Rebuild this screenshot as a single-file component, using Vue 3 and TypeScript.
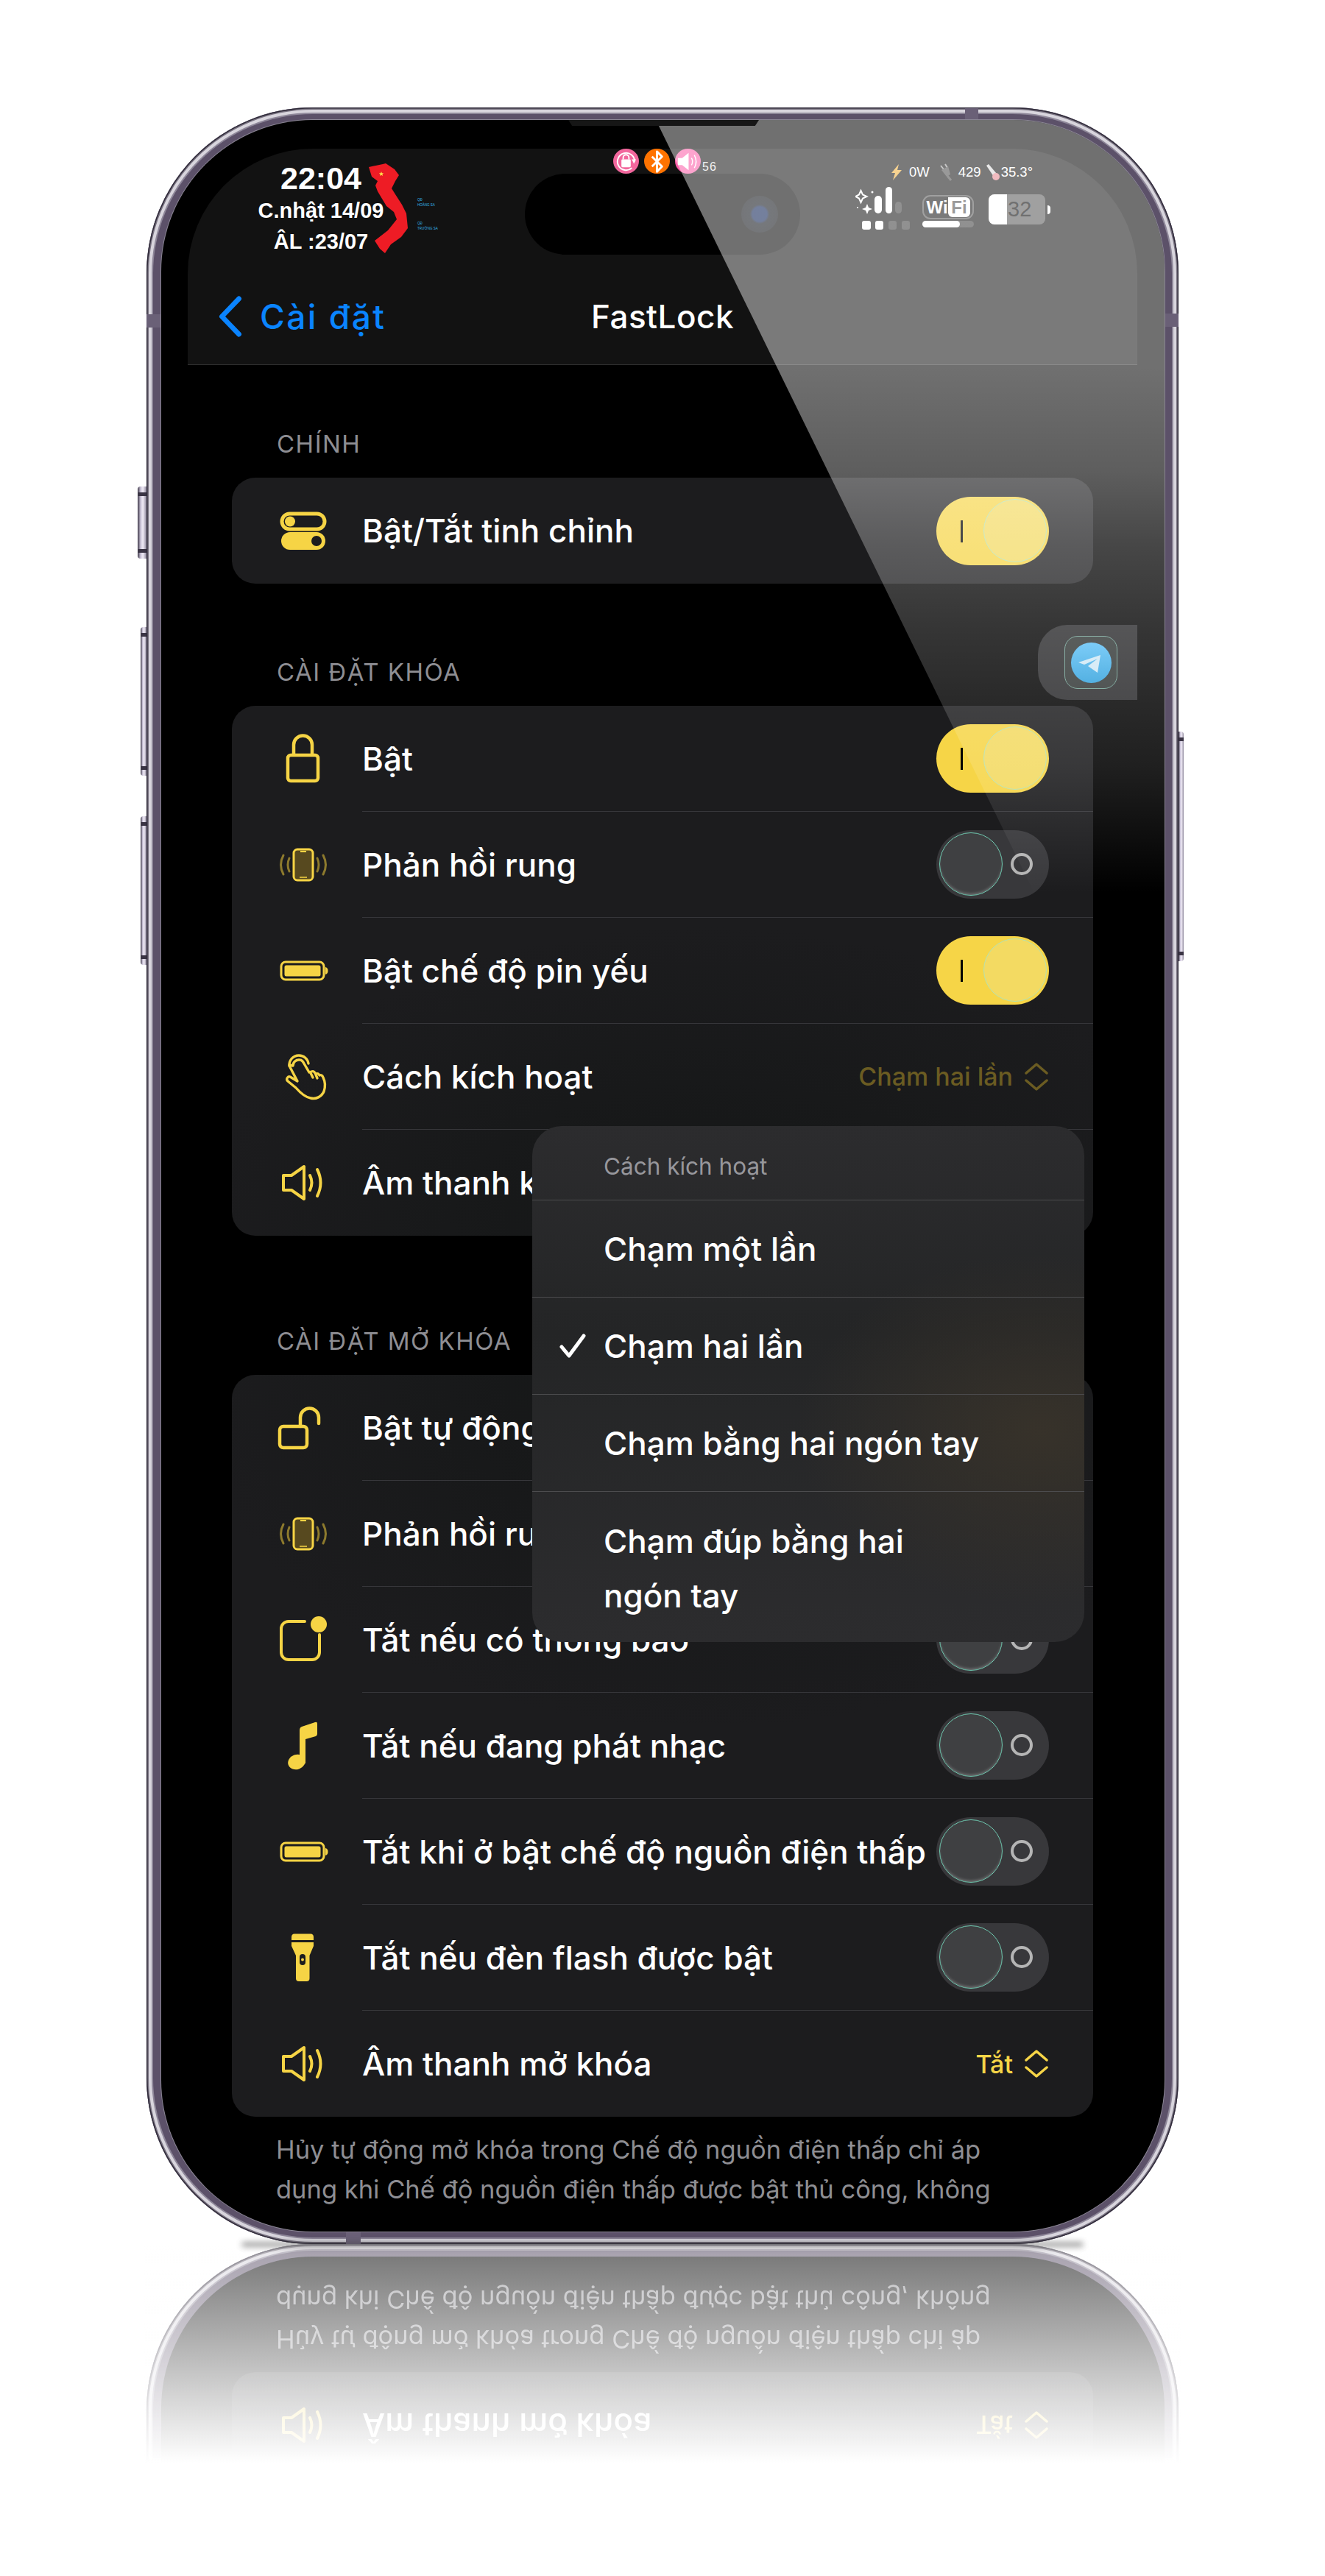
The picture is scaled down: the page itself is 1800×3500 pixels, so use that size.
<script setup lang="ts">
interface Row {
  icon: string;
  label: string;
  toggle?: "on" | "off";
  value?: string;
  dim?: boolean;
}

const mainRows: Row[] = [
  { icon: "switches", label: "Bật/Tắt tinh chỉnh", toggle: "on" },
];

const lockRows: Row[] = [
  { icon: "lock", label: "Bật", toggle: "on" },
  { icon: "haptic", label: "Phản hồi rung", toggle: "off" },
  { icon: "battery", label: "Bật chế độ pin yếu", toggle: "on" },
  { icon: "hand", label: "Cách kích hoạt", value: "Chạm hai lần", dim: true },
  { icon: "speaker", label: "Âm thanh khóa", value: "Tắt" },
];

const unlockRows: Row[] = [
  { icon: "unlock", label: "Bật tự động mở khóa", toggle: "off" },
  { icon: "haptic", label: "Phản hồi rung", toggle: "off" },
  { icon: "notice", label: "Tắt nếu có thông báo", toggle: "off" },
  { icon: "music", label: "Tắt nếu đang phát nhạc", toggle: "off" },
  { icon: "battery", label: "Tắt khi ở bật chế độ nguồn điện thấp", toggle: "off" },
  { icon: "flash", label: "Tắt nếu đèn flash được bật", toggle: "off" },
  { icon: "speaker", label: "Âm thanh mở khóa", value: "Tắt" },
];

const sections = [
  { title: "Chính", rows: mainRows, cls: "first" },
  { title: "Cài đặt khóa", rows: lockRows, cls: "lock" },
  { title: "Cài đặt mở khóa", rows: unlockRows, cls: "unlock" },
];

const menu = [
  { label: "Chạm một lần", checked: false },
  { label: "Chạm hai lần", checked: true },
  { label: "Chạm bằng hai ngón tay", checked: false },
  { label: "Chạm đúp bằng hai ngón tay", checked: false, wide: true },
];

const footLines = [
  "Hủy tự động mở khóa trong Chế độ nguồn điện thấp chỉ áp",
  "dụng khi Chế độ nguồn điện thấp được bật thủ công, không",
];
</script>

<template>
  <svg class="defs" width="0" height="0">
    <symbol id="i-switches" viewBox="0 0 72 72">
      <rect x="7" y="13" width="58" height="21" rx="10.5" fill="none" stroke="#f6d445" stroke-width="5" />
      <circle cx="18" cy="23.5" r="7" fill="#f6d445" />
      <rect x="6" y="38" width="60" height="24" rx="12" fill="#f6d445" />
      <circle cx="54" cy="50" r="7" fill="#1c1c1e" />
    </symbol>
    <symbol id="i-lock" viewBox="0 0 72 72">
      <rect x="15" y="31" width="41" height="35" rx="4" fill="none" stroke="#f6d445" stroke-width="4.5" />
      <path d="M23 31V17a12.5 12.5 0 0 1 25 0V31" fill="none" stroke="#f6d445" stroke-width="4.5" />
    </symbol>
    <symbol id="i-unlock" viewBox="0 0 72 72">
      <rect x="4" y="34" width="37" height="29" rx="5" fill="none" stroke="#f6d445" stroke-width="4.5" />
      <path d="M32 34V22a12.5 12.5 0 0 1 25 0V30" fill="none" stroke="#f6d445" stroke-width="4.5" stroke-linecap="round" />
    </symbol>
    <symbol id="i-haptic" viewBox="0 0 72 72">
      <rect x="23" y="15" width="26" height="42" rx="5" fill="#57491f" stroke="#f6d445" stroke-width="3" />
      <path d="M32 18h8" stroke="#f6d445" stroke-width="2" />
      <path d="M31 53h10" stroke="#f6d445" stroke-width="1.5" />
      <g fill="none" stroke="#8d7a2d" stroke-width="3" stroke-linecap="round">
        <path d="M17 27q-4 9 0 18" />
        <path d="M9 23q-7 13 0 26" />
        <path d="M55 27q4 9 0 18" />
        <path d="M63 23q7 13 0 26" />
      </g>
    </symbol>
    <symbol id="i-battery" viewBox="0 0 72 72">
      <rect x="6" y="24" width="58" height="24" rx="6" fill="none" stroke="#f6d445" stroke-width="3" />
      <rect x="10.5" y="28.5" width="49" height="15" rx="2.5" fill="#f6d445" />
      <path d="M66 31c3 1 3.5 2.5 3.5 5s-.5 4-3.5 5z" fill="#f6d445" />
    </symbol>
    <symbol id="i-hand" viewBox="0 0 72 72">
      <g fill="none" stroke="#f6d445" stroke-width="3.4" stroke-linecap="round" stroke-linejoin="round">
        <path d="M17 21a13 13 0 0 1 13-14c7 0 12 5 13 11" />
        <path d="M22 21a8 8 0 0 1 9-8c3 0 5 3 6 5l7 12 3-1c2-1 4 0 5 2l1 1c2-1 4 0 5 2 2-1 4 0 5 3 3 6 3 13 1 19-3 7-11 11-18 9-7-1-13-6-20-14l-11-9c-3-3 0-7 3-6l10 6-10-19c-1-1-1-2-1-3z" />
        <path d="M46 31l3 6M53 33l2 5" />
      </g>
    </symbol>
    <symbol id="i-speaker" viewBox="0 0 72 72">
      <g fill="none" stroke="#f6d445" stroke-width="4" stroke-linecap="round" stroke-linejoin="round">
        <path d="M9 26h11l17-12v44L20 46H9z" />
        <path d="M45 26q5 10 0 20" />
        <path d="M55 18q9 18 0 36" />
      </g>
    </symbol>
    <symbol id="i-notice" viewBox="0 0 72 72">
      <path d="M38 11H16a10 10 0 0 0-10 10v32a10 10 0 0 0 10 10h32a10 10 0 0 0 10-10V29" fill="none" stroke="#f6d445" stroke-width="4" stroke-linecap="round" />
      <circle cx="57" cy="15" r="11" fill="#f6d445" />
    </symbol>
    <symbol id="i-music" viewBox="0 0 72 72">
      <path d="M31 15q0-4 3-5l18-6q3-1 3 2v14q0 2-2 3l-14 4v33h-8z" fill="#f6d445" />
      <ellipse cx="27" cy="58" rx="12" ry="10" transform="rotate(-20 27 58)" fill="#f6d445" />
    </symbol>
    <symbol id="i-flash" viewBox="0 0 72 72">
      <path d="M20 8q0-4.500 4-4.500h22q4 0 4 4.500v4H20z" fill="#f6d445" />
      <path d="M20 15h30v5l-5.500 13v31q0 4-4 4H30q-4 0-4-4V33l-6-13z" fill="#f6d445" />
      <rect x="31" y="31" width="8" height="15" rx="4" fill="#1c1c1e" />
      <circle cx="35" cy="38.500" r="2" fill="#f6d445" />
    </symbol>
  </svg>

  <div class="page">
    <div class="phone">
      <i class="btn silent"></i>
      <i class="btn vol-up"></i>
      <i class="btn vol-down"></i>
      <i class="btn power"></i>
      <i class="band band-top"></i>
      <i class="band band-left"></i>
      <i class="band band-right"></i>
      <i class="band band-bottom"></i>

      <div class="screen">
        <i class="speaker-slit"></i>

        <header class="panel">
          <div class="status">
            <div class="st-left">
              <div class="clock">
                <div class="time">22:04</div>
                <div class="date">C.nhật 14/09</div>
                <div class="date">ÂL :23/07</div>
              </div>
              <svg class="map" viewBox="0 0 100 125" width="100" height="125">
                <path d="M0 5 19 1 23 0 35 8 41 16 36 24 31 34 36 42 45 56 51 68 53 88 44 100 30 110 22 122 15 116 8 105 26 91 38 76 34 66 24 58 12 38 9 30 12 24 4 18Z" fill="#ee1c25" />
                <path d="M17 11l.9 2.200 2.300.1-1.800 1.500.6 2.300-2-1.300-2 1.300.6-2.300-1.800-1.500 2.300-.1z" fill="#ffe14a" />
                <text class="islet" x="66" y="51">QĐ</text>
                <text class="islet" x="66" y="58">HOÀNG SA</text>
                <text class="islet" x="66" y="83">QĐ</text>
                <text class="islet" x="66" y="90">TRƯỜNG SA</text>
              </svg>
            </div>

            <div class="st-center">
              <div class="notify">
                <span class="dot pink">
                  <svg viewBox="0 0 36 36" width="35" height="35">
                    <path d="M30 18a12 12 0 1 0-4 9" fill="none" stroke="#fff" stroke-width="2" />
                    <path d="M32 15l-3 6-3-6z" fill="#fff" />
                    <rect x="11.500" y="15" width="13" height="11" rx="1.500" fill="#fff" />
                    <path d="M14 15v-2.500a4 4 0 0 1 8 0V15" fill="none" stroke="#fff" stroke-width="2" />
                  </svg>
                </span>
                <span class="dot orange">
                  <svg viewBox="0 0 36 36" width="35" height="35">
                    <path d="M11 11l14 14-7 7V4l7 7-14 14" fill="none" stroke="#fff" stroke-width="3" stroke-linejoin="round" />
                  </svg>
                </span>
                <span class="dot pink2">
                  <svg viewBox="0 0 36 36" width="35" height="35">
                    <path d="M4 13h6l9-7v24l-9-7H4z" fill="#fff" />
                    <path d="M23 13q3 5 0 10M27 9q5 9 0 18" fill="none" stroke="#fff" stroke-width="1.500" />
                  </svg>
                </span>
                <span class="vol">56</span>
              </div>
              <div class="island"><span class="camera"></span></div>
            </div>

            <div class="st-right">
              <div class="metrics">
                <svg viewBox="0 0 18 22" width="18" height="22">
                  <path d="M12 0 2 12h5L4 22l12-14h-6z" fill="#f2b13a" />
                </svg>
                <span class="m-zero">0W</span>
                <svg viewBox="0 0 24 24" width="24" height="24">
                  <path d="M6 3l4 5M12 1l3 5" stroke="#9a9a9a" stroke-width="2" />
                  <path d="M7 9l9-5 3 11-5 3z" fill="#4a4a4a" />
                  <path d="M15 17l5 6" stroke="#4a4a4a" stroke-width="3" />
                </svg>
                <span>429</span>
                <svg viewBox="0 0 22 24" width="22" height="24">
                  <path d="M2 3l3-2 11 13-4 4z" fill="#d8d8d8" />
                  <circle cx="15" cy="18" r="5" fill="#e5868e" />
                </svg>
                <span class="m-temp">35.3°</span>
              </div>
              <div class="signals">
                <svg viewBox="0 0 74 58" width="74" height="58">
                  <path d="M7.500 5l2.500 5.500L15.500 13 10 15.500 7.500 21 5 15.500 0 13 5 10.500Z" fill="none" stroke="#fff" stroke-width="2" />
                  <path d="M16 23l2 5 5 2-5 2-2 5-2-5-5-2 5-2Z" fill="#fff" />
                  <circle cx="23" cy="7" r="1.500" fill="#fff" />
                  <circle cx="3" cy="28" r="1" fill="#fff" />
                  <rect x="26" y="12" width="10" height="24" rx="5" fill="#fff" />
                  <rect x="41" y="0" width="9" height="36" rx="4.500" fill="#fff" />
                  <rect x="54" y="20" width="9" height="16" rx="4.500" fill="#3a3a3a" />
                  <rect x="9" y="46" width="12" height="12" rx="3" fill="#fff" />
                  <rect x="27" y="46" width="11" height="12" rx="3" fill="#fff" />
                  <rect x="45" y="46" width="11" height="12" rx="3" fill="#3a3a3a" />
                  <rect x="63" y="46" width="11" height="12" rx="3" fill="#3a3a3a" />
                </svg>
                <div class="wifi">
                  <div class="wifi-box"><b>Wi</b><b class="fi">Fi</b></div>
                  <div class="wifi-bar"><i></i></div>
                </div>
                <div class="batt">
                  <div class="batt-body"><i></i><span>32</span></div>
                  <i class="batt-nub"></i>
                </div>
              </div>
            </div>
          </div>

          <nav class="nav">
            <div class="back">
              <svg viewBox="0 0 36 60" width="36" height="58">
                <path d="M30 5 6 30l24 25" fill="none" stroke="#0a84ff" stroke-width="7" stroke-linecap="round" stroke-linejoin="round" />
              </svg>
              <span>Cài đặt</span>
            </div>
            <div class="nav-title">FastLock</div>
          </nav>
        </header>

        <main class="content">
          <section v-for="s in sections" :key="s.title" class="section" :class="s.cls">
            <h3 class="label">{{ s.title }}</h3>
            <div class="card">
              <div v-for="r in s.rows" :key="r.label" class="row">
                <svg class="icon" width="72" height="72"><use :href="'#i-' + r.icon" /></svg>
                <div class="row-body">
                  <span class="row-text">{{ r.label }}</span>
                  <span v-if="r.toggle" class="toggle" :class="r.toggle">
                    <i class="mark"></i>
                    <i class="knob"></i>
                  </span>
                  <span v-else class="value" :class="{ dim: r.dim }">
                    {{ r.value }}
                    <svg viewBox="0 0 34 38" width="34" height="38">
                      <path d="M3 14 17 2l14 12M3 24l14 12 14-12" fill="none" stroke="currentColor" stroke-width="3.500" stroke-linecap="round" stroke-linejoin="round" />
                    </svg>
                  </span>
                </div>
              </div>
            </div>
          </section>
          <p class="foot">{{ footLines[0] }}<br />{{ footLines[1] }}</p>
        </main>

        <div class="tg-tab">
          <div class="tg-square">
            <div class="tg-circle">
              <svg viewBox="0 0 55 55" width="55" height="55">
                <path d="M10 27 40 17 36 41 23 32 36 22 18 30Z" fill="#cfe8f5" />
              </svg>
            </div>
          </div>
        </div>

        <i class="glare"></i>

        <div class="menu">
          <div class="menu-head">Cách kích hoạt</div>
          <div v-for="m in menu" :key="m.label" class="menu-item" :class="{ wide: m.wide }">
            <svg v-if="m.checked" class="check" viewBox="0 0 36 34" width="36" height="34">
              <path d="M3 18 13 30 33 3" fill="none" stroke="#fff" stroke-width="5" stroke-linecap="round" stroke-linejoin="round" />
            </svg>
            <span>{{ m.label }}</span>
          </div>
        </div>
      </div>
    </div>

    <div class="reflection">
      <div class="mirror">
        <div class="mirror-screen">
          <div class="card mirror-card">
            <div class="row">
              <svg class="icon" width="72" height="72"><use href="#i-speaker" /></svg>
              <div class="row-body">
                <span class="row-text">Âm thanh mở khóa</span>
                <span class="value">
                  Tắt
                  <svg viewBox="0 0 34 38" width="34" height="38">
                    <path d="M3 14 17 2l14 12M3 24l14 12 14-12" fill="none" stroke="currentColor" stroke-width="3.500" stroke-linecap="round" stroke-linejoin="round" />
                  </svg>
                </span>
              </div>
            </div>
          </div>
          <p class="foot">{{ footLines[0] }}<br />{{ footLines[1] }}</p>
        </div>
      </div>
      <i class="fade"></i>
      <i class="contact"></i>
    </div>
  </div>
</template>

<style>
html,
body {
  background: #fff;
}
</style>

<style scoped>
.defs {
  position: absolute;
}
.page {
  width: 1800px;
  height: 3500px;
  padding: 146px 199px 0;
  box-sizing: border-box;
  background: #fff;
  font-family: Inter, "Noto Sans", sans-serif;
  overflow: hidden;
}
.phone {
  position: relative;
  box-sizing: border-box;
  width: 1402px;
  height: 2903px;
  padding: 17px 19px 17px 20px;
  border-radius: 226px;
  background: #5c5169;
  box-shadow:
    inset 0 0 0 1.5px #2f2a39,
    inset 0 0 0 3px #77717f,
    inset 0 0 0 7px #d8d5dd,
    inset 0 0 0 9px #8e8799;
}
.btn {
  position: absolute;
  border-radius: 4px 0 0 4px;
  background: linear-gradient(90deg, #3d3747, #cfc8dc 35%, #efeaf5 60%, #8f889c);
}
.btn::before,
.btn::after {
  content: "";
  position: absolute;
  left: 0;
  right: 0;
  height: 5px;
  background: #3a3444;
}
.btn::before {
  top: 8px;
}
.btn::after {
  bottom: 8px;
}
.silent {
  left: -12px;
  top: 515px;
  width: 12px;
  height: 98px;
}
.vol-up {
  left: -8px;
  top: 706px;
  width: 8px;
  height: 202px;
}
.vol-down {
  left: -8px;
  top: 963px;
  width: 8px;
  height: 202px;
}
.power {
  right: -7px;
  top: 848px;
  width: 7px;
  height: 312px;
  border-radius: 0 4px 4px 0;
}
.band {
  position: absolute;
  background: #6a6077;
}
.band-top {
  left: 1112px;
  top: 1px;
  width: 18px;
  height: 17px;
}
.band-left {
  left: 0;
  top: 281px;
  width: 20px;
  height: 18px;
}
.band-right {
  right: 0;
  top: 280px;
  width: 19px;
  height: 18px;
}
.band-bottom {
  left: 271px;
  bottom: 0;
  width: 20px;
  height: 17px;
}
.screen {
  position: relative;
  height: 2869px;
  border-radius: 206px;
  background: #000;
  overflow: hidden;
  box-shadow: 0 0 0 1px #8a8594;
}
.speaker-slit {
  position: absolute;
  z-index: 3;
  left: 553px;
  top: 0;
  width: 259px;
  height: 8px;
  background: #161616;
  clip-path: polygon(0 0, 100% 0, 98% 100%, 2% 100%);
}
.panel {
  margin: 39px 37px 0 36px;
  height: 294px;
  box-sizing: border-box;
  background: #121212;
  border-radius: 170px 170px 0 0;
  border-bottom: 1px solid #303030;
  display: flex;
  flex-direction: column;
}
.status {
  display: flex;
  height: 155px;
  flex: none;
  color: #fff;
  font-family: "Liberation Sans", Arial, sans-serif;
}
.st-left {
  width: 458px;
  flex: none;
  display: flex;
  padding-left: 91px;
  box-sizing: border-box;
}
.clock {
  width: 180px;
  flex: none;
  text-align: center;
  font-weight: 700;
  padding-top: 17px;
}
.time {
  font-size: 43px;
  line-height: 46px;
}
.date {
  font-size: 29px;
  line-height: 42px;
}
.map {
  margin: 20px 0 0 -25px;
}
.islet {
  font-size: 4.500px;
  fill: #35b5ea;
  font-family: "Liberation Sans", Arial, sans-serif;
}
.st-center {
  width: 374px;
  flex: none;
}
.notify {
  display: flex;
  height: 34px;
  padding-left: 120px;
  gap: 7px;
}
.dot {
  width: 35px;
  height: 34px;
  border-radius: 50%;
  overflow: hidden;
  flex: none;
}
.dot svg {
  display: block;
}
.pink {
  background: #f2679d;
}
.orange {
  background: #ff7300;
}
.pink2 {
  background: #fb5ca8;
}
.vol {
  font-size: 16px;
  letter-spacing: 1px;
  line-height: 16px;
  margin: 17px 0 0 -5px;
  opacity: 0.9;
}
.island {
  height: 110px;
  border-radius: 55px;
  background: #000;
  display: flex;
  align-items: center;
  justify-content: flex-end;
  padding-right: 30px;
  box-sizing: border-box;
}
.camera {
  width: 50px;
  height: 50px;
  border-radius: 50%;
  background: radial-gradient(circle, #081c50 0 10px, #0a0f16 13px, #08090c 100%);
}
.st-right {
  padding-left: 75px;
}
.metrics {
  height: 28px;
  margin: 18px 0 6px 47px;
  display: flex;
  align-items: center;
  font-size: 18.500px;
  white-space: nowrap;
}
.metrics span {
  margin: 0 5px 0 6px;
}
.metrics .m-zero {
  margin: 0 9px 0 8px;
}
.metrics .m-temp {
  margin: 0;
}
.signals {
  display: flex;
  align-items: flex-start;
}
.signals > svg {
  flex: none;
}
.wifi {
  margin: 11px 0 0 17px;
  width: 70px;
}
.wifi-box {
  height: 33px;
  box-sizing: border-box;
  border: 2px solid #555;
  border-radius: 11px;
  display: flex;
  align-items: center;
  padding: 0 3px;
  font-size: 24px;
  line-height: 27px;
}
.wifi-box b {
  flex: 1;
  text-align: center;
}
.wifi-box .fi {
  background: #fff;
  color: #4b4b4b;
  border-radius: 0 6px 6px 6px;
}
.wifi-bar {
  height: 9px;
  margin-top: 2px;
  border-radius: 5px;
  background: #3a3a3a;
}
.wifi-bar i {
  display: block;
  width: 51px;
  height: 9px;
  border-radius: 5px;
  background: #fff;
}
.batt {
  display: flex;
  align-items: center;
  margin: 10px 0 0 20px;
}
.batt-body {
  width: 77px;
  height: 41px;
  border-radius: 8px;
  overflow: hidden;
  background: #565656;
  display: flex;
  align-items: center;
}
.batt-body i {
  width: 25px;
  align-self: stretch;
  background: #fff;
}
.batt-body span {
  margin-left: 1px;
  font-size: 29px;
  color: #000;
}
.batt-nub {
  width: 4px;
  height: 12px;
  margin-left: 3px;
  border-radius: 0 6px 6px 0;
  background: #fff;
}
.nav {
  flex: 1;
  display: grid;
  grid-template-columns: 1fr auto 1fr;
  align-items: center;
  padding: 8px 40px 0;
}
.back {
  display: flex;
  align-items: center;
  gap: 22px;
  color: #0a84ff;
  font-size: 46px;
  letter-spacing: 2.5px;
  font-weight: 500;
}
.nav-title {
  grid-column: 2;
  color: #fff;
  font-size: 44px;
  letter-spacing: 0.5px;
  font-weight: 500;
}
.content {
  margin: 0 97px 0 96px;
}
.section {
  margin-top: 100px;
}
.section.first {
  margin-top: 87px;
}
.section.unlock {
  margin-top: 123px;
}
.label {
  margin: 0 0 26px;
  padding-left: 61px;
  font-size: 33px;
  letter-spacing: 1.5px;
  line-height: 40px;
  font-weight: 400;
  text-transform: uppercase;
  color: #8e8e93;
}
.card {
  border-radius: 32px;
  background: #1c1c1e;
}
.section.lock .card {
  background: radial-gradient(ellipse 700px 420px at 55% 100%, #141616, #1c1c1e);
}
.section.unlock .card {
  background: radial-gradient(ellipse 700px 480px at 55% 0, #141616, #1c1c1e);
}
.row {
  height: 144px;
  display: flex;
  align-items: center;
}
.icon {
  flex: none;
  margin: 0 44px 0 61px;
}
.row-body {
  flex: 1;
  min-width: 0;
  height: 144px;
  display: flex;
  align-items: center;
  justify-content: space-between;
  padding-right: 60px;
  border-bottom: 1px solid #36363a;
  box-sizing: border-box;
}
.row:last-child .row-body {
  border-bottom: 0;
}
.row-text {
  color: #fff;
  font-size: 44px;
  font-weight: 500;
  white-space: nowrap;
}
.toggle {
  position: relative;
  flex: none;
  display: block;
  width: 153px;
  height: 93px;
  border-radius: 47px;
}
.toggle.on {
  background: #f6d547;
}
.toggle.off {
  background: #38383b;
}
.mark {
  position: absolute;
  left: 33px;
  top: 32px;
  width: 3px;
  height: 30px;
  background: #000;
}
.off .mark {
  left: 101px;
  top: 31px;
  width: 30px;
  height: 30px;
  box-sizing: border-box;
  border: 4px solid #b5b5b5;
  border-radius: 50%;
  background: none;
}
.knob {
  position: absolute;
  top: 3px;
  width: 86px;
  height: 86px;
  box-sizing: border-box;
  border-radius: 50%;
}
.on .knob {
  right: 3px;
  border: 1.500px solid #b4e2b4;
  background: rgba(240, 224, 130, 0.45);
}
.off .knob {
  left: 4px;
  border: 1.500px solid #6fc9b0;
  background: #3f4042;
  box-shadow: inset 0 -3px 4px -2px rgba(255, 255, 255, 0.35);
}
.value {
  flex: none;
  display: flex;
  align-items: center;
  gap: 15px;
  font-size: 34px;
  font-weight: 500;
  color: #f6d547;
}
.value.dim {
  color: #6b5c22;
}
.foot {
  margin: 18px 0 0;
  padding-left: 60px;
  font-size: 34.5px;
  line-height: 54px;
  color: #8e8e93;
  white-space: nowrap;
}
.tg-tab {
  position: absolute;
  top: 686px;
  right: 37px;
  width: 135px;
  height: 102px;
  box-sizing: border-box;
  padding: 15px 27px 15px 36px;
  border-radius: 40px 0 0 40px;
  background: #28282a;
}
.tg-square {
  width: 72px;
  height: 72px;
  box-sizing: border-box;
  border: 1px solid #6d9d90;
  border-radius: 18px;
  background: #2f3433;
  display: flex;
  align-items: center;
  justify-content: center;
}
.tg-circle {
  width: 55px;
  height: 55px;
  border-radius: 50%;
  background: linear-gradient(#5bbff6, #2fa0dc);
}
.tg-circle svg {
  display: block;
}
.glare {
  position: absolute;
  z-index: 2;
  left: 0;
  top: 0;
  width: 100%;
  height: 1050px;
  clip-path: polygon(672px 0, 100% 0, 100% 100%, 1186px 100%);
  background: linear-gradient(
    rgba(255, 255, 255, 0.44) 0,
    rgba(255, 255, 255, 0.44) 337px,
    rgba(255, 255, 255, 0.37) 477px,
    rgba(255, 255, 255, 0.28) 577px,
    rgba(255, 255, 255, 0.21) 686px,
    rgba(255, 255, 255, 0.165) 787px,
    rgba(255, 255, 255, 0.125) 877px,
    rgba(255, 255, 255, 0) 1050px
  );
}
.menu {
  position: absolute;
  z-index: 4;
  left: 504px;
  top: 1367px;
  width: 750px;
  border-radius: 40px;
  overflow: hidden;
  color: #fff;
  font-size: 44px;
  font-weight: 500;
  background:
    radial-gradient(ellipse 330px 240px at 92% 59%, #37322a, rgba(55, 50, 42, 0)),
    linear-gradient(#2c2c2e, #242526 40%, #2c2c2e);
}
.menu-head {
  height: 100px;
  box-sizing: border-box;
  padding: 35px 0 0 97px;
  font-size: 31.500px;
  line-height: 40px;
  font-weight: 400;
  color: #97979c;
}
.menu-item {
  position: relative;
  height: 132px;
  box-sizing: border-box;
  display: flex;
  align-items: center;
  padding: 0 60px 0 97px;
  border-top: 1px solid #4c4c4e;
}
.menu-item.wide {
  height: 205px;
  line-height: 74px;
  align-items: flex-start;
  padding-top: 30px;
  padding-right: 200px;
}
.check {
  position: absolute;
  left: 37px;
  top: 49px;
}
.reflection {
  position: relative;
  width: 1402px;
  height: 300px;
}
.mirror {
  box-sizing: border-box;
  height: 300px;
  padding: 0 19px 17px 20px;
  transform: scaleY(-1);
  border-radius: 0 0 226px 226px;
  background: #5c5169;
  box-shadow:
    inset 0 0 0 1.5px #2f2a39,
    inset 0 0 0 3px #77717f,
    inset 0 0 0 7px #d8d5dd,
    inset 0 0 0 9px #8e8799;
}
.mirror-screen {
  height: 283px;
  border-radius: 0 0 206px 206px;
  background: #000;
  overflow: hidden;
  padding: 0 97px 0 96px;
  box-sizing: border-box;
}
.mirror-card {
  margin-top: -18px;
}
.fade {
  position: absolute;
  inset: 0 -4px;
  background: linear-gradient(rgba(255, 255, 255, 0.45), #fff 99%);
}
.contact {
  position: absolute;
  left: 130px;
  right: 130px;
  top: -2px;
  height: 5px;
  background: #444;
  filter: blur(4px);
  opacity: 0.7;
}
</style>
